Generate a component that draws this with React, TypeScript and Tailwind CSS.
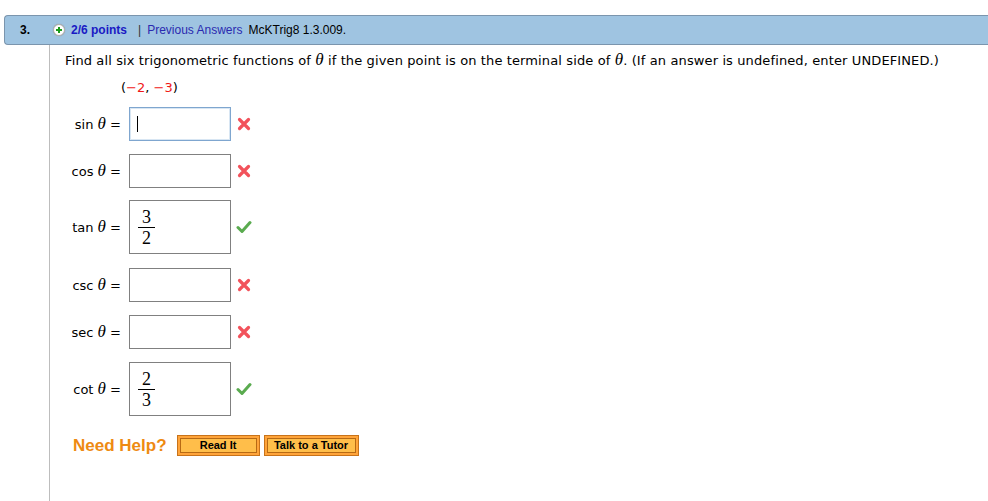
import React from "react";

const Theta = () => (
  <span className="italic" style={{ fontFamily: '"Liberation Serif", serif' }}>
    <span className="text-[17px]">θ</span>
  </span>
);

const Cross = () => (
  <svg width="14" height="14" viewBox="0 0 14 14">
    <path d="M2.5 2.5 L11.5 11.5 M11.5 2.5 L2.5 11.5" stroke="#f2525b" strokeWidth="3.2" strokeLinecap="round" />
  </svg>
);

const Check = () => (
  <svg width="16" height="14" viewBox="0 0 16 14">
    <path d="M2 7.5 L6 11.5 L14 2.5" stroke="#5aab4f" strokeWidth="3" fill="none" strokeLinecap="round" strokeLinejoin="round" />
  </svg>
);

const Frac = ({ n, d }: { n: string; d: string }) => (
  <div className="flex flex-col items-center w-[17px] ml-[8px] text-[18px] leading-[20px] text-black" style={{ fontFamily: '"Liberation Serif", serif' }}>
    <span>{n}</span>
    <span className="w-[17px] h-px bg-black"></span>
    <span>{d}</span>
  </div>
);

type Row = { fn: string; kind: "empty" | "focus" | "frac"; n?: string; d?: string; ok: boolean; mt: string };

const rows: Row[] = [
  { fn: "sin", kind: "focus", ok: false, mt: "mt-0" },
  { fn: "cos", kind: "empty", ok: false, mt: "mt-[13px]" },
  { fn: "tan", kind: "frac", n: "3", d: "2", ok: true, mt: "mt-[12px]" },
  { fn: "csc", kind: "empty", ok: false, mt: "mt-[14px]" },
  { fn: "sec", kind: "empty", ok: false, mt: "mt-[13px]" },
  { fn: "cot", kind: "frac", n: "2", d: "3", ok: true, mt: "mt-[13px]" },
];

export default function App() {
  return (
    <div className="w-[988px] h-[501px] bg-white overflow-hidden relative" style={{ fontFamily: '"DejaVu Sans", Verdana, sans-serif' }}>
      <div className="pt-[15px] pl-[4px]">
        <div
          className="h-[30px] bg-[#9fc4e1] border border-r-0 border-[#7b95ad] rounded-l-[4px] flex items-center text-[12px]"
          style={{ fontFamily: '"Liberation Sans", Arial, sans-serif' }}
        >
          <span className="ml-[15px] w-[22px] font-bold text-black">3.</span>
          <span className="ml-[11px] w-[12px] h-[12px] rounded-full bg-white border border-[#b0b0b0] flex items-center justify-center shadow-[0_0_1px_#888]">
            <svg width="8" height="8" viewBox="0 0 8 8">
              <path d="M4 1 V7 M1 4 H7" stroke="#1a9a1a" strokeWidth="2" />
            </svg>
          </span>
          <span className="ml-[6px] font-bold text-[#1a1ac4]">2/6 points</span>
          <span className="ml-[11px] text-[#333]">|</span>
          <span className="ml-[6px] text-[#2a2ab0]">Previous Answers</span>
          <span className="ml-[6px] text-black">McKTrig8 1.3.009.</span>
        </div>
      </div>
      <div className="ml-[49px] border-l border-[#bdbdbd] h-[460px] pl-[15px]">
        <div className="pt-[7px] text-[13px] text-black leading-[16px] tracking-[0.12px]">
          Find all six trigonometric functions of <Theta /> if the given point is on the terminal side of <Theta />. (If an answer is undefined, enter UNDEFINED.)
        </div>
        <div className="mt-[11px] ml-[56px] text-[13px] leading-[16px]">
          (<span className="text-[#f01818]">−2</span>, <span className="text-[#f01818]">−3</span>)
        </div>
        <div className="mt-[11px] flex flex-col">
          {rows.map((r) => (
            <div key={r.fn} className={`flex items-center ${r.mt}`}>
              <div className="w-[56px] text-right text-[13px] text-black whitespace-nowrap">
                {r.fn} <Theta /> =
              </div>
              <div
                className={`ml-[8px] w-[102px] bg-white flex items-center ${
                  r.kind === "frac" ? "h-[54px] border border-[#808080]" : "h-[34px]"
                } ${r.kind === "focus" ? "border border-[#7fa6cf] shadow-[inset_0_0_0_1px_#d8e6f3]" : ""} ${r.kind === "empty" ? "border border-[#808080]" : ""}`}
              >
                {r.kind === "focus" && <span className="ml-[7px] w-px h-[16px] bg-black"></span>}
                {r.kind === "frac" && <Frac n={r.n!} d={r.d!} />}
              </div>
              <div className="ml-[5px] w-[16px] flex justify-center">{r.ok ? <Check /> : <Cross />}</div>
            </div>
          ))}
        </div>
        <div className="mt-[17px] ml-[8px] flex items-center" style={{ fontFamily: '"Liberation Sans", Arial, sans-serif' }}>
          <span className="text-[17px] font-bold text-[#ee8a12]">Need Help?</span>
          <button className="ml-[10px] w-[83px] h-[21px] border border-[#c8731a] bg-[#ffa43a] p-[2px]">
            <div className="w-full h-full border border-[#b86a14] bg-[#ffbe4a] text-[11px] font-bold text-black leading-[13px] flex items-center justify-center">Read It</div>
          </button>
          <button className="ml-[4px] w-[95px] h-[21px] border border-[#c8731a] bg-[#ffa43a] p-[2px]">
            <div className="w-full h-full border border-[#b86a14] bg-[#ffbe4a] text-[11px] font-bold text-black leading-[13px] flex items-center justify-center">Talk to a Tutor</div>
          </button>
        </div>
      </div>
    </div>
  );
}
